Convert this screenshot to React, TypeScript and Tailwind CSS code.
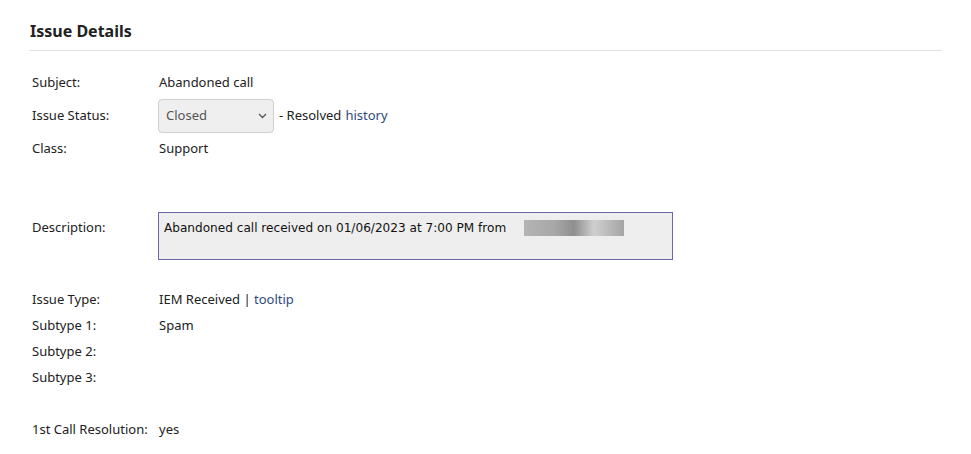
export default function App() {
    return (
        <main className="min-h-screen bg-white text-[#212121] font-['Segoe_UI','Noto_Sans',sans-serif] text-[13px]">
            <div className="px-[29px] pt-[18px]">
                <h2 className="text-[16px] font-bold leading-[26px] pl-[1px] pb-[6px] border-b border-[#e3e3e3] w-[913px]">
                    Issue Details
                </h2>

                <div className="pl-[3px] pt-[20px]">
                    <div className="flex items-center h-[24px]">
                        <div className="w-[127px]">Subject:</div>
                        <div>Abandoned call</div>
                    </div>
                    <div className="flex items-center h-[42px]">
                        <div className="w-[126px]">Issue Status:</div>
                        <div className="flex items-center">
                            <div className="w-[116px] h-[34px] rounded-[4px] border border-[#d0d0d0] bg-[#efefef] flex items-center justify-between pl-[7px] pr-[6px] text-[#555]">
                                <span>Closed</span>
                                <svg width="9" height="6" viewBox="0 0 9 6" fill="none">
                                    <path d="M1 1l3.5 3.5L8 1" stroke="#555" strokeWidth="1.3" />
                                </svg>
                            </div>
                            <span className="ml-[5px]">- Resolved</span>
                            <a className="ml-[4px] text-[#2e4a7d]" href="#">history</a>
                        </div>
                    </div>
                    <div className="flex items-center h-[24px]">
                        <div className="w-[127px]">Class:</div>
                        <div>Support</div>
                    </div>

                    <div className="flex items-start mt-[51px]">
                        <div className="w-[126px] pt-[6px] leading-[18px]">Description:</div>
                        <div className="w-[515px] h-[48px] border border-[#6b68a8] bg-[#eeeeee] pl-[5px] pt-[7px] font-['DejaVu_Sans',sans-serif] text-[12.1px] leading-[16px] text-[#111]">
                            <div className="flex items-center">
                                <span>Abandoned call received on 01/06/2023 at 7:00 PM from</span>
                                <span className="ml-[18px] inline-block w-[100px] h-[16px] bg-[linear-gradient(90deg,#b4b4b4_0%,#a8a8a8_30%,#8f8f8f_50%,#cfcfcf_70%,#a4a4a4_100%)]"></span>
                            </div>
                        </div>
                    </div>

                    <div className="mt-[27px]">
                        <div className="flex items-center h-[26px]">
                            <div className="w-[127px]">Issue Type:</div>
                            <div>
                                IEM Received | <a className="text-[#2e4a7d]" href="#">tooltip</a>
                            </div>
                        </div>
                        <div className="flex items-center h-[26px]">
                            <div className="w-[127px]">Subtype 1:</div>
                            <div>Spam</div>
                        </div>
                        <div className="flex items-center h-[26px]">
                            <div className="w-[127px]">Subtype 2:</div>
                        </div>
                        <div className="flex items-center h-[26px]">
                            <div className="w-[127px]">Subtype 3:</div>
                        </div>
                        <div className="flex items-center h-[26px] mt-[26px]">
                            <div className="w-[127px]">1st Call Resolution:</div>
                            <div>yes</div>
                        </div>
                    </div>
                </div>
            </div>
        </main>
    );
}
